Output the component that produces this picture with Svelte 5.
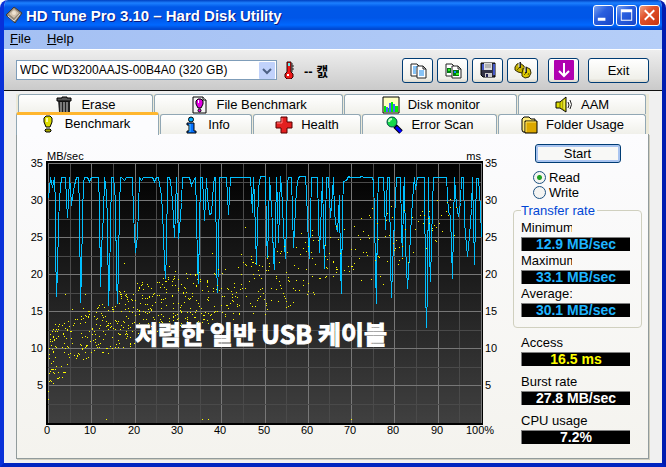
<script lang="ts">
  let drive = $state('WDC WD3200AAJS-00B4A0 (320 GB)');
  let mode = $state('read');
  let activeTab = $state('Benchmark');

  const backTabs = ['Erase', 'File Benchmark', 'Disk monitor', 'AAM'];
  const frontTabs = ['Benchmark', 'Info', 'Health', 'Error Scan', 'Folder Usage'];
  const tools = ['Copy text', 'Copy screenshot', 'Save', 'Options'];

  const rates = [
    { label: 'Minimum', value: '12.9 MB/sec' },
    { label: 'Maximum', value: '33.1 MB/sec' },
    { label: 'Average:', value: '30.1 MB/sec' },
  ];

  const stats = [
    { label: 'Access', value: '16.5 ms', color: 'yellow' },
    { label: 'Burst rate', value: '27.8 MB/sec', color: 'white' },
    { label: 'CPU usage', value: '7.2%', color: 'white' },
  ];

  // plot area in chart units
  const left = 48;
  const right = 481;
  const top = 163;
  const bottom = 423;
  const columns = Array.from({ length: 21 }, (_, i) => Math.round(left + i * 21.65));
  const rows = Array.from({ length: 14 }, (_, i) => Math.round(top + i * 18.5));
  const scale = [35, 30, 25, 20, 15, 10, 5];

  // transfer rate samples
  const transfer = `48,198 50,177 52,187 54,177 55,205 55,245 56,296 57,270 58,225 59,198 61,177 65,177 66,200 67,217 68,200
    69,177 70,188 71,205 72,196 74,185 76,177 78,177 79,208 80,302 81,272 82,217 83,182 84,177 87,177 89,181 91,177 98,177
    99,205 100,286 101,248 103,215 104,177 106,192 107,222 108,305 109,278 111,177 113,177 115,200 116,278 117,303 118,265
    119,207 120,177 121,177 124,180 126,177 132,177 133,213 135,252 137,235 138,208 139,177 141,180 143,177 152,177 154,181
    156,177 158,177 161,195 162,212 163,235 164,263 165,278 166,252 167,177 169,177 170,181 172,200 174,237 175,212 176,177
    178,238 179,228 181,202 182,177 189,177 191,185 193,180 195,177 196,212 197,265 198,283 199,228 200,177 202,177 204,220
    206,178 207,197 209,214 211,213 213,185 214,177 215,177 216,263 217,292 218,263 219,177 226,177 228,214 230,177 250,177
    252,212 253,177 254,200 256,264 257,228 258,187 260,176 265,176 266,232 267,258 268,225 269,177 270,192 272,225 273,258
    274,269 275,228 276,177 277,205 278,242 280,176 282,203 283,232 285,258 287,182 288,177 291,177 293,247 295,208 296,188
    298,177 300,176 305,176 306,192 308,245 309,258 310,218 311,177 317,177 318,218 319,252 321,205 322,177 323,228 324,268
    326,177 328,177 330,217 332,192 333,177 334,212 336,228 337,230 338,215 339,195 340,267 341,293 342,208 343,181 346,180
    348,176 350,177 359,177 361,176 364,177 372,177 373,181 374,212 375,272 376,303 377,208 378,177 383,177 385,229 387,177
    389,177 390,263 391,297 392,268 394,218 396,177 400,177 401,228 402,256 403,195 404,177 405,245 407,288 409,255 411,215
    413,187 414,177 415,189 417,177 424,177 425,288 426,327 427,288 428,177 429,252 430,281 432,205 433,177 446,177 448,212
    450,215 452,278 454,177 456,205 458,216 460,202 461,177 463,177 464,222 466,245 467,256 469,235 471,208 472,177 474,264
    476,178 478,178 480,208 481,237`;

  // access time bands: x from, x to, top, bottom, number of points
  const bands = [
    [49, 56, 323, 388, 34], [56, 68, 322, 380, 36], [68, 90, 308, 362, 52], [90, 112, 302, 354, 52],
    [112, 135, 290, 350, 70], [135, 160, 282, 334, 66], [160, 185, 276, 328, 64], [185, 210, 272, 325, 60],
    [210, 240, 267, 320, 48], [240, 270, 254, 315, 48], [270, 300, 246, 308, 34], [300, 330, 238, 296, 30],
    [330, 360, 225, 280, 24], [360, 390, 212, 270, 20], [390, 415, 205, 266, 14], [415, 437, 200, 258, 16],
    [437, 465, 194, 238, 10],
  ];
  const strays = [
    [48, 391], [48, 399], [53, 383], [106, 419], [202, 419], [208, 419], [351, 419], [124, 263], [169, 266],
    [175, 271], [212, 253], [245, 227], [301, 233], [312, 230], [312, 235], [383, 284], [398, 264], [361, 280],
    [380, 276], [371, 279], [437, 200], [372, 208], [391, 206], [85, 294], [65, 294], [103, 352], [123, 347],
  ];

  function scatter() {
    let seed = 310;
    const next = () => {
      seed = (seed * 16807) % 2147483647;
      return seed / 2147483647;
    };
    const points = [...strays];
    for (const [x0, x1, y0, y1, count] of bands) {
      for (let i = 0; i < count; i++) {
        points.push([Math.floor(x0 + next() * (x1 - x0)), Math.floor(y0 + next() * (y1 - y0))]);
      }
    }
    return points.map(([x, y]) => `M${x} ${y}h1v1h-1z`).join('');
  }

  const accessDots = scatter();
</script>

{#snippet icon(name: string)}
  <svg class="icon" width="18" height="18" viewBox="0 0 18 18" aria-hidden="true">
    {#if name === 'Erase'}
      <path d="M3 4h12v12l-1 2H5l-1-2z" fill="#222" />
      <path d="M6 6v10M9 6v10M12 6v10" stroke="#999" stroke-width="1.5" />
      <path d="M2 2h5V1h5v1h4v3H2z" fill="#555" stroke="#000" />
    {:else if name === 'File Benchmark'}
      <path d="M3 1h10l3 3v13H3z" fill="#f4f4f4" stroke="#000" />
      <path d="M13 1v3h3" fill="#fff" stroke="#000" />
      <path d="M8 3h3l2 2v3l-2 4H8L6 8V5z" fill="#e000e0" stroke="#000" />
      <path d="M8 4h1v3H8z" fill="#fff" />
      <circle cx="9.5" cy="14.5" r="1.5" fill="#e0e" stroke="#000" />
    {:else if name === 'Disk monitor'}
      <path d="M1 1h16v16H1z" fill="#ffffc0" stroke="#000" />
      <path d="M4 11h2v5H4zM7 7h2v9H7zM11 8h2v8h-2z" fill="#46f" />
      <path d="M2 10h2v6H2zM6 12h1v4H6zM9 6h2v10H9zM13 10h3v6h-3z" fill="#0e0" />
    {:else if name === 'AAM'}
      <path d="M1 6h4l6-5v15l-6-4H1z" fill="#dd0" stroke="#000" />
      <path d="M5 6v6M8 4v10" stroke="#776b00" />
      <path d="M9 4v9" stroke="#ffff80" />
      <path d="M13 6q2 3 0 6M15 4q3 4.500 0 9" fill="none" stroke="#222" />
    {:else if name === 'Benchmark'}
      <path d="M7 1h4l2 2v4l-2 5H7L5 7V3z" fill="#dddd00" stroke="#000" />
      <path d="M7 3h2v4H7z" fill="#ffffa0" />
      <path d="M7 14h4l1 1v1l-1 1H7l-1-1v-1z" fill="#aa0" stroke="#000" />
    {:else if name === 'Info'}
      <circle cx="9" cy="3.500" r="2.500" fill="#0af" stroke="#000" />
      <path d="M5 7h7v8h2v2H5v-2h2V9H5z" fill="#0671ff" stroke="#000" />
      <path d="M8 8v8" stroke="#5cf" />
    {:else if name === 'Health'}
      <path d="M6 1h6v5h5v6h-5v5H6v-5H1V6h5z" fill="#e42020" stroke="#500" />
      <path d="M7 2v5H2" fill="none" stroke="#ff8080" />
    {:else if name === 'Error Scan'}
      <path d="M10 10l6 6" stroke="#000" stroke-width="5" />
      <path d="M11 11l5 5" stroke="#00f" stroke-width="3" />
      <circle cx="7" cy="6" r="5" fill="#16d94c" stroke="#044" />
      <path d="M4 6q0-3 3-3" fill="none" stroke="#c0ffc0" stroke-width="2" />
    {:else if name === 'Folder Usage'}
      <path d="M2 3l2-2h5l2 2h4v13H3l-1-2z" fill="#ffec7a" stroke="#000" />
      <path d="M5 5h12v12H5z" fill="#dca800" stroke="#000" />
      <path d="M6 16V6h10" fill="none" stroke="#ffe668" />
    {:else if name === 'Copy text' || name === 'Copy screenshot'}
      <path d="M2 3h6l3 3v9H2z" fill="#fff" stroke="#222" />
      <path d="M8 5h6l3 3v9H8z" fill="#fff" stroke="#222" />
      <path d="M14 5v3h3" fill="none" stroke="#222" />
      {#if name === 'Copy text'}
        <path d="M4 6h4M4 8h3M4 10h3M4 12h3M10 10h5M10 12h5M10 14h5" stroke="#18e" />
      {:else}
        <path d="M3 7h4v5H3zM9 9h6v6H9z" fill="#071" />
        <path d="M4 8h2v2H4zM12 12h3v2h-3z" fill="#3e2" />
        <path d="M10 10h2v2h-2z" fill="#18f" />
      {/if}
    {:else if name === 'Save'}
      <path d="M2 2h14v14H4l-2-2z" fill="#334" stroke="#000" />
      <path d="M3 3h2v6H3zM14 3h2v11h-2z" fill="#4559c7" />
      <path d="M5 2h8v7H5z" fill="#ddd" />
      <path d="M6 4h6M6 6h6" stroke="#888" />
      <path d="M6 12h7v4H6z" fill="#ccc" />
      <path d="M7 13h2v3H7z" fill="#225" />
    {:else if name === 'Options'}
      <path d="M1 6l2-3 3-1 4 3 1 4-3 3-4-1-3-2z" fill="#c8b400" stroke="#332b00" />
      <path d="M8 12l1-4 3-2 4 2 1 4-2 4-4 1-3-2z" fill="#dcc800" stroke="#332b00" />
      <path d="M3 9l2-2M8 9l1-2M10 14l2-2M14 14l1-2" stroke="#665b00" />
      <path d="M6 1v6M12 6v6" stroke="#222" stroke-width="2" />
      <path d="M5 1v5M11 6v5" stroke="#eee" />
    {/if}
  </svg>
{/snippet}

{#snippet tab(name: string)}
  <button class="tab" class:active={activeTab === name} role="tab" aria-selected={activeTab === name} onclick={() => (activeTab = name)}>
    {@render icon(name)}
    <span>{name}</span>
  </button>
{/snippet}

<div class="window">
  <header class="titlebar">
    <svg width="18" height="18" viewBox="0 0 18 18" aria-hidden="true">
      <path d="M1 9l8-8 8 6-7 10z" fill="#948878" stroke="#3f3a36" />
      <path d="M4 8l5-5 5 4-5 5z" fill="#d3c3ad" />
      <circle cx="9" cy="7" r="2" fill="#eee2d1" />
      <path d="M3 10l6 5 6-7" fill="none" stroke="#ddd" />
    </svg>
    <h1>HD Tune Pro 3.10 – Hard Disk Utility</h1>
    <div class="controls">
      <button class="control" aria-label="Minimize">
        <svg width="20" height="20" viewBox="0 0 20 20"><path d="M4 13h8v3H4z" fill="#fff" /></svg>
      </button>
      <button class="control" aria-label="Maximize">
        <svg width="20" height="20" viewBox="0 0 20 20"><path d="M4 4h12v12H4zM5 7v8h10V7z" fill="#fff" fill-rule="evenodd" /></svg>
      </button>
      <button class="control close" aria-label="Close">
        <svg width="20" height="20" viewBox="0 0 20 20"><path d="M5 5l10 10M15 5L5 15" stroke="#fff" stroke-width="2" /></svg>
      </button>
    </div>
  </header>

  <nav class="menu">
    <button><u>F</u>ile</button>
    <button><u>H</u>elp</button>
  </nav>

  <div class="toolbar">
    <div class="drive">
      <select bind:value={drive} aria-label="Drive">
        <option>WDC WD3200AAJS-00B4A0 (320 GB)</option>
      </select>
      <svg class="arrow" width="16" height="17" viewBox="0 0 16 17" aria-hidden="true">
        <rect width="16" height="17" rx="1" fill="#c1d2fb" />
        <path d="M4 7l4 4 4-4" fill="none" stroke="#4d6185" stroke-width="2" />
      </svg>
    </div>
    <svg class="thermo" width="10" height="18" viewBox="0 0 10 18" aria-hidden="true">
      <path d="M3 1h4v10l2 2v3l-2 2H3l-2-2v-3l2-2z" fill="#f01818" stroke="#300" />
      <path d="M4 2h2v3H4z" fill="#6ee" />
      <path d="M3 13h2v2H3z" fill="#fff" />
      <path d="M8 2v9M8 5h2M8 8h2" stroke="#222" />
    </svg>
    <strong class="temperature">-- 캜</strong>
    <div class="tools">
      {#each tools as tool}
        <button class="tool" aria-label={tool}>{@render icon(tool)}</button>
      {/each}
      <button class="tool minimize" aria-label="Minimize to tray">
        <svg class="icon" width="20" height="20" viewBox="0 0 20 20" aria-hidden="true">
          <rect width="20" height="20" rx="1" fill="#b000b0" />
          <path d="M10 3v13M5 11l5 5 5-5" fill="none" stroke="#fff" stroke-width="2" />
        </svg>
      </button>
      <button class="tool exit">Exit</button>
    </div>
  </div>

  <main>
    <div class="tabs" role="tablist">
      <div class="row back">
        {#each backTabs as name}{@render tab(name)}{/each}
      </div>
      <div class="row front">
        {#each frontTabs as name}{@render tab(name)}{/each}
      </div>
    </div>

    <section class="panel">
      <svg class="chart" viewBox="24 144 480 300" role="img" aria-label="Transfer rate and access time">
        <defs>
          <linearGradient id="plot" x1="0" y1="0" x2="0" y2="1">
            <stop offset="0" stop-color="#000" />
            <stop offset="1" stop-color="#404040" />
          </linearGradient>
        </defs>
        <rect x="46" y="161" width="437" height="264" fill="#000" />
        <rect x="48" y="163" width="434" height="260" fill="url(#plot)" />
        <g shape-rendering="crispEdges">
          {#each columns as x, i}
            <rect {x} y={top} width="1" height={bottom - top} fill={i % 2 ? '#4a4a4a' : '#777'} />
          {/each}
          {#each rows as y, i}
            <rect x={left} {y} width={right - left} height="1" fill={i % 2 ? '#4a4a4a' : '#777'} />
          {/each}
          <polyline points={transfer} transform="translate(.5 .5)" fill="none" stroke="#00bfff" />
          <path d={accessDots} fill="#ff0" />
        </g>
        <g class="axis">
          <text x="47" y="160">MB/sec</text>
          <text x="481" y="160" text-anchor="end">ms</text>
          {#each scale as value, i}
            <text x="43" y={167 + i * 37} text-anchor="end">{value}</text>
            <text x="485" y={167 + i * 37}>{value}</text>
          {/each}
          {#each columns as x, i}
            {#if i % 2 === 0}
              <text x={x - 1} y="434" text-anchor="middle">{i * 5}{i === 20 ? '%' : ''}</text>
            {/if}
          {/each}
        </g>
        <text class="caption" x="135" y="344">저렴한 일반 USB 케이블</text>
      </svg>

      <aside>
        <button class="start">Start</button>
        <div class="modes">
          <label><input type="radio" name="mode" value="read" bind:group={mode} />Read</label>
          <label><input type="radio" name="mode" value="write" bind:group={mode} />Write</label>
        </div>
        <fieldset>
          <legend>Transfer rate</legend>
          {#each rates as rate}
            <div class="label short">{rate.label}</div>
            <output class="blue">{rate.value}</output>
          {/each}
        </fieldset>
        <div class="stats">
          {#each stats as stat}
            <div class="stat">
              <div class="label">{stat.label}</div>
              <output class={stat.color}>{stat.value}</output>
            </div>
          {/each}
        </div>
      </aside>
    </section>
  </main>
</div>

<style>
  :global(body) {
    background: #fff;
  }

  .window {
    box-sizing: border-box;
    min-height: 100vh;
    display: flex;
    flex-direction: column;
    border: 4px solid #0540dc;
    border-top: 0;
    border-color: #0540dc #001cb0 #0024c0 #0831d9;
    border-radius: 8px 8px 0 0;
    overflow: hidden;
    background: #f0f0f0;
    font-family: "Liberation Sans", "Noto Sans CJK KR", sans-serif;
    font-size: 13px;
    color: #000;
  }

  button,
  select {
    font: inherit;
    color: inherit;
  }

  .titlebar {
    display: flex;
    align-items: center;
    gap: 3px;
    height: 30px;
    margin: 0 -4px;
    padding: 0 6px 0 5px;
    background: linear-gradient(#0040c0, #1c80ff 3px, #0058e8 7px, #0056e8 18px, #0068ff 25px, #0048d0 29px);
  }

  h1 {
    flex: 1;
    margin: 0;
    font-size: 15px;
    font-weight: bold;
    color: #fff;
    text-shadow: 1px 1px #0a1883;
    white-space: nowrap;
  }

  .controls {
    display: flex;
    gap: 2px;
  }

  .control {
    display: flex;
    align-items: center;
    justify-content: center;
    width: 21px;
    height: 21px;
    padding: 0;
    border: 1px solid #fff;
    border-radius: 3px;
    background: linear-gradient(135deg, #7ba2f0, #2a5fdf 40%, #1745c8);
  }

  .control.close {
    background: linear-gradient(135deg, #f0a080, #e0512a 40%, #c83510);
  }

  .menu {
    display: flex;
    height: 19px;
    background: linear-gradient(90deg, #a4c0f3, #b5cef8);
    border-bottom: 1px solid #fff;
  }

  .menu button {
    padding: 0 6px 2px;
    margin-right: 4px;
    border: 0;
    background: none;
  }

  .toolbar {
    display: flex;
    align-items: center;
    height: 40px;
    padding: 0 13px 0 12px;
    background: linear-gradient(#eee, #cacaca);
    border-bottom: 1px solid #111;
  }

  .drive {
    position: relative;
    flex: 0 1 261px;
  }

  .drive select {
    appearance: none;
    width: 100%;
    height: 20px;
    padding: 0 20px 0 3px;
    border: 1px solid #7f9db9;
    border-radius: 0;
    background: #fff;
    font-size: 12px;
  }

  .arrow {
    position: absolute;
    right: 2px;
    top: 2px;
    pointer-events: none;
  }

  .thermo {
    margin: 0 10px 0 7px;
  }

  .temperature {
    white-space: nowrap;
    word-spacing: normal;
  }

  .tools {
    display: flex;
    gap: 4px;
    margin-left: auto;
  }

  .tool {
    display: flex;
    align-items: center;
    justify-content: center;
    width: 31px;
    height: 25px;
    padding: 0;
    border: 1px solid #003c74;
    border-radius: 3px;
    background: linear-gradient(#fff, #f0f0ea 85%, #dcd8cc);
  }

  .minimize {
    margin-left: 6px;
  }

  .exit {
    width: 61px;
    margin-left: 5px;
  }

  .icon {
    flex: none;
  }

  main {
    flex: 1;
    display: flex;
    flex-direction: column;
    padding: 3px 13px 4px 12px;
  }

  .tabs {
    padding-left: 1px;
    background: #ece9d8;
  }

  .row {
    display: grid;
    gap: 1px;
  }

  .back {
    grid-template-columns: 135fr 190fr 173fr 128fr;
    height: 20px;
    padding: 0 3px 0 1px;
  }

  .front {
    grid-template-columns: 142fr 92fr 108fr 135fr 148fr;
    height: 20px;
    padding-right: 3px;
  }

  .tab {
    display: flex;
    align-items: center;
    justify-content: center;
    gap: 8px;
    min-width: 0;
    padding: 0;
    border: 1px solid #91a7b4;
    border-bottom: 0;
    border-radius: 3px 3px 0 0;
    background: linear-gradient(#fff, #f0f0ea);
    white-space: nowrap;
  }

  .tab.active {
    position: relative;
    height: 23px;
    margin: -2px 0 -1px -1px;
    padding: 0 6px 3px 0;
    border-top: 3px solid #ffb62e;
    background: #fcfcfe;
  }

  .panel {
    flex: 1;
    display: flex;
    align-items: flex-start;
    gap: 9px;
    padding: 10px 6px 10px 7px;
    border: 1px solid #919b9c;
    border-top: 0;
    box-shadow: 1px 1px #d0cebf;
    background: linear-gradient(#fcfcfe, #f4f3ee);
  }

  .chart {
    display: block;
    flex: 1;
    min-width: 0;
  }

  .axis {
    font-size: 11px;
  }

  .caption {
    fill: #fff;
    stroke: #fff;
    stroke-width: 1px;
    font-family: "Noto Sans CJK KR", sans-serif;
    font-size: 25px;
    font-weight: bold;
  }

  aside {
    flex: 0 0 129px;
  }

  .start {
    display: block;
    width: 86px;
    height: 19px;
    margin: 0 auto;
    padding: 0;
    border: 1px solid #003c74;
    border-radius: 3px;
    box-shadow: inset 0 0 0 2px #a9c4f0;
    background: #f8f8f6;
  }

  .modes {
    padding: 7px 0 0 20px;
  }

  .modes label {
    display: flex;
    align-items: center;
    gap: 3px;
    height: 15px;
  }

  .modes input {
    appearance: none;
    width: 13px;
    height: 13px;
    margin: 0;
    border: 1px solid #1c5180;
    border-radius: 50%;
    background: #f4f4f2;
  }

  .modes input:checked {
    background: radial-gradient(circle, #21a121 2px, #f4f4f2 3px);
  }

  fieldset {
    min-width: 0;
    margin: 3px 0 0;
    padding: 0 11px 10px 7px;
    border: 1px solid #d0d0bf;
    border-radius: 4px;
  }

  legend {
    padding: 0 2px 0 0;
    line-height: 15px;
    color: #0046d5;
  }

  .label {
    line-height: 19px;
    white-space: nowrap;
  }

  .short {
    width: 51px;
    overflow: hidden;
  }

  output {
    display: block;
    box-sizing: border-box;
    height: 14px;
    border-top: 1px solid #808080;
    border-left: 1px solid #808080;
    background: #000;
    font-size: 14px;
    font-weight: bold;
    line-height: 13px;
    text-align: center;
    white-space: nowrap;
  }

  .blue {
    color: #1eb4ff;
  }

  .yellow {
    color: #ff0;
  }

  .white {
    color: #fff;
  }

  .stats {
    display: flex;
    flex-direction: column;
    gap: 6px;
    padding: 5px 12px 0 8px;
  }
</style>
